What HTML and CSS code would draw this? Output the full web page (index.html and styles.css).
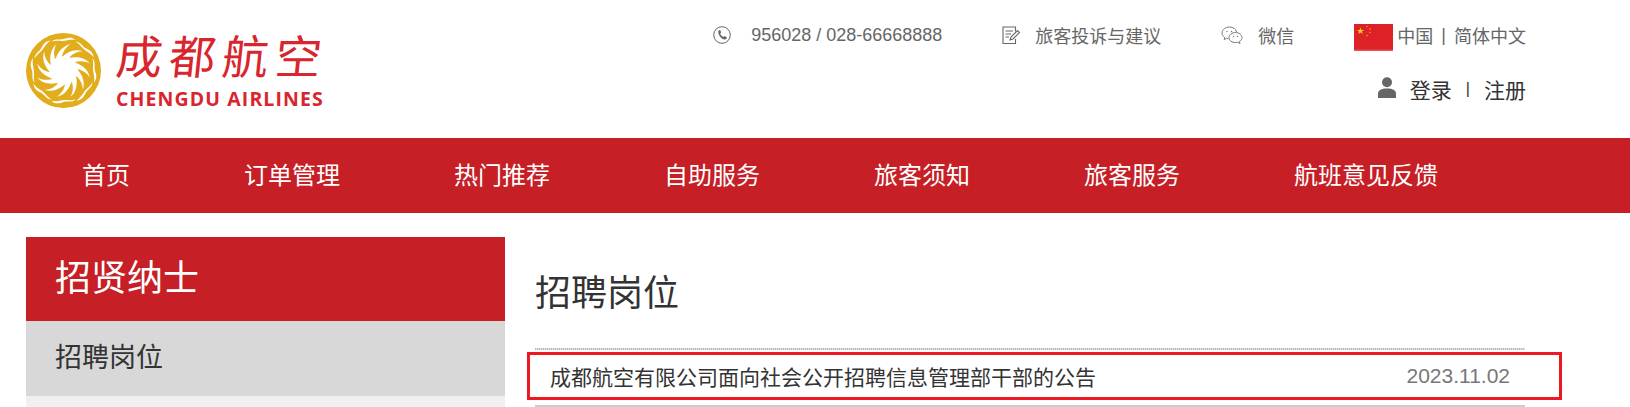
FILE: index.html
```html
<!DOCTYPE html>
<html lang="zh-CN">
<head>
    <meta charset="UTF-8">
    <meta name="viewport" content="width=device-width, initial-scale=1.0">
    <title>成都航空 - 招聘岗位</title>
    <link rel="stylesheet" href="styles.css">
</head>
<body>
    <header class="site-header">
        <a class="logo" href="#">
            <svg class="logo-mark" viewBox="-37 -37 74 74" width="75" height="75">
                <defs>
                    <path id="blade" d="M-3 -12 C3 -18 11 -22 19 -19 C13 -19 8 -16 4 -11 Z"/>
                    <path id="orn" d="M-12 -28.5 C-8 -32 -4 -30 0 -31 C3 -32 7 -34 12 -30 C8 -31 5 -30 1 -29.4 C-3 -28.6 -7 -30 -12 -28.5 Z"/>
                </defs>
                <circle r="37" fill="#e2ad1c"/>
                <circle r="14" fill="#fff"/>
                <g fill="#fff">
                    <use href="#blade"/>
                    <use href="#blade" transform="rotate(30)"/>
                    <use href="#blade" transform="rotate(60)"/>
                    <use href="#blade" transform="rotate(90)"/>
                    <use href="#blade" transform="rotate(120)"/>
                    <use href="#blade" transform="rotate(150)"/>
                    <use href="#blade" transform="rotate(180)"/>
                    <use href="#blade" transform="rotate(210)"/>
                    <use href="#blade" transform="rotate(240)"/>
                    <use href="#blade" transform="rotate(270)"/>
                    <use href="#blade" transform="rotate(300)"/>
                    <use href="#blade" transform="rotate(330)"/>
                    <use href="#orn"/>
                    <use href="#orn" transform="rotate(45)"/>
                    <use href="#orn" transform="rotate(90)"/>
                    <use href="#orn" transform="rotate(135)"/>
                    <use href="#orn" transform="rotate(180)"/>
                    <use href="#orn" transform="rotate(225)"/>
                    <use href="#orn" transform="rotate(270)"/>
                    <use href="#orn" transform="rotate(315)"/>
                </g>
            </svg>
            <div class="logo-text">
                <div class="logo-cn">成都航空</div>
                <div class="logo-en">CHENGDU AIRLINES</div>
            </div>
        </a>

        <div class="header-right">
            <div class="contact-row">
                <div class="contact-item phone">
                    <svg class="icon" viewBox="0 0 18 18" width="18" height="18" fill="none" stroke="#666">
                        <circle cx="9" cy="9" r="8.3"/>
                        <path d="M5.6 4.6 L7.2 4 L8.2 6.6 L7.2 7.6 C7.6 9 8.8 10.4 10.4 11 L11.4 10 L14 11.4 L13.2 13 C11.8 14 9.4 13.2 7.6 11.2 C5.6 9.2 4.8 6.2 5.6 4.6 Z" fill="#666" stroke="none"/>
                    </svg>
                    <span>956028 / 028-66668888</span>
                </div>
                <div class="contact-item">
                    <svg class="icon" viewBox="0 0 18 18" width="18" height="18" fill="none" stroke="#666" stroke-width="1.1">
                        <path d="M13.5 5.5 V1 H1 V17.5 H13.5 V13"/>
                        <path d="M3.5 5 H11 M3.5 8 H9 M3.5 11 H7"/>
                        <path d="M8 14 L9 11 L15.5 4.5 L17.5 6.5 L11 13 Z" fill="#fff"/>
                    </svg>
                    <span>旅客投诉与建议</span>
                </div>
                <div class="contact-item">
                    <svg class="icon" viewBox="0 0 22 18" width="22" height="18" fill="none" stroke="#777">
                        <path d="M8.5 1 C4.4 1 1 3.6 1 7 C1 8.9 2.2 10.5 3.8 11.6 L3.2 13.6 L5.6 12.4 C6.2 12.6 6.8 12.7 7.4 12.8"/>
                        <path d="M15.6 6 C15 3 12 1 8.5 1"/>
                        <path d="M14.5 6.5 C11 6.5 8 8.8 8 11.6 C8 14.4 11 16.6 14.5 16.6 C15.3 16.6 16 16.5 16.7 16.3 L19 17.5 L18.5 15.4 C20 14.4 21 13.1 21 11.6 C21 8.8 18 6.5 14.5 6.5 Z"/>
                        <circle cx="6" cy="5.5" r="0.7" fill="#777" stroke="none"/>
                        <circle cx="10.5" cy="5.5" r="0.7" fill="#777" stroke="none"/>
                        <circle cx="12.5" cy="10.5" r="0.7" fill="#777" stroke="none"/>
                        <circle cx="16.5" cy="10.5" r="0.7" fill="#777" stroke="none"/>
                    </svg>
                    <span>微信</span>
                </div>
                <div class="contact-item lang">
                    <svg class="flag" viewBox="0 0 39 27" width="39" height="27">
                        <rect width="39" height="27" fill="#de2027"/>
                        <rect y="25.5" width="39" height="1.5" fill="#e8505a"/>
                        <polygon points="6.5,3.5 7.4,6 10,6 7.9,7.6 8.7,10 6.5,8.6 4.3,10 5.1,7.6 3,6 5.6,6" fill="#f5d21c"/>
                        <circle cx="13" cy="2.5" r="0.8" fill="#e9a02a"/>
                        <circle cx="16" cy="5" r="0.8" fill="#e9a02a"/>
                        <circle cx="16" cy="8.5" r="0.8" fill="#e9a02a"/>
                        <circle cx="13" cy="11.5" r="0.8" fill="#e9a02a"/>
                    </svg>
                    <span>中国</span>
                    <span class="sep">|</span>
                    <span>简体中文</span>
                </div>
            </div>
            <div class="user-row">
                <svg class="icon" viewBox="0 0 18 21" width="18" height="21" fill="#666">
                    <circle cx="9" cy="5.2" r="5"/>
                    <path d="M0 21 V16.5 C0 13.2 3.5 11.4 9 11.4 C14.5 11.4 18 13.2 18 16.5 V21 Z"/>
                </svg>
                <a href="#">登录</a>
                <span class="sep">|</span>
                <a href="#">注册</a>
            </div>
        </div>
    </header>

    <nav class="main-nav">
        <a href="#">首页</a>
        <a href="#">订单管理</a>
        <a href="#">热门推荐</a>
        <a href="#">自助服务</a>
        <a href="#">旅客须知</a>
        <a href="#">旅客服务</a>
        <a href="#">航班意见反馈</a>
    </nav>

    <div class="page-body">
        <aside class="sidebar">
            <h2>招贤纳士</h2>
            <a class="side-item active" href="#">招聘岗位</a>
            <div class="side-rest"></div>
        </aside>
        <main class="content">
            <h1>招聘岗位</h1>
            <ul class="job-list">
                <li class="job-row">
                    <a href="#">成都航空有限公司面向社会公开招聘信息管理部干部的公告</a>
                    <span class="job-date">2023.11.02</span>
                </li>
            </ul>
        </main>
    </div>
</body>
</html>
```

FILE: styles.css
```css
html, body {
    height: 407px;
    overflow: hidden;
}

body {
    margin: 0;
    padding: 0;
    background: #fff;
    color: #333;
    font-family: "Liberation Sans", "Noto Sans CJK SC", sans-serif;
}

a {
    color: inherit;
    text-decoration: none;
}

.site-header {
    display: flex;
    justify-content: space-between;
    height: 138px;
    padding: 0 104px 0 26px;
    box-sizing: border-box;
}

.logo {
    display: flex;
    gap: 15px;
    padding-top: 33px;
}

.logo-mark {
    display: block;
}

.logo-text {
    width: 208px;
}

.logo-cn {
    height: 57px;
    color: #d9252d;
    font-size: 46px;
    line-height: 50px;
    letter-spacing: 7px;
    white-space: nowrap;
    transform: skewX(-6deg);
}

.logo-en {
    color: #d9252d;
    font-family: "Open Sans", sans-serif;
    font-size: 19.5px;
    font-weight: 700;
    line-height: 18px;
    letter-spacing: 1.1px;
    white-space: nowrap;
}

.header-right {
    display: flex;
    flex-direction: column;
    align-items: flex-end;
    padding-top: 24px;
}

.contact-row {
    display: flex;
    align-items: flex-start;
    gap: 60px;
    height: 27px;
    color: #666;
    font-size: 18px;
}

.contact-item {
    display: flex;
    align-items: center;
    gap: 15px;
    height: 22px;
}

.contact-item.phone {
    gap: 20px;
}

.contact-item.lang {
    gap: 4px;
}

.contact-item .sep {
    margin: 0 4px;
}

.icon {
    display: block;
    flex: none;
}

.flag {
    display: block;
    flex: none;
    align-self: flex-start;
}

.user-row {
    display: flex;
    align-items: center;
    gap: 14px;
    height: 30px;
    margin-top: 23px;
    color: #333;
    font-size: 21px;
}

.user-row .icon {
    margin-bottom: 3px;
}

.user-row .sep {
    font-size: 16px;
}

.main-nav {
    display: flex;
    height: 75px;
    padding-left: 25px;
    background: #c61f26;
}

.main-nav a {
    padding: 0 57px;
    color: #fff;
    font-size: 24px;
    line-height: 75px;
}

.page-body {
    display: flex;
    gap: 30px;
    padding: 24px 105px 0 26px;
}

.sidebar {
    flex: none;
    width: 479px;
}

.sidebar h2 {
    margin: 0;
    padding-left: 29px;
    background: #c61f26;
    color: #fff;
    font-size: 36px;
    font-weight: 400;
    line-height: 84px;
}

.side-item {
    display: block;
    height: 75px;
    padding-left: 29px;
    font-size: 27px;
    line-height: 75px;
}

.side-item.active {
    background: #d8d8d8;
}

.side-rest {
    height: 11px;
    background: #f0f0f0;
}

.content {
    flex: 1;
}

.content h1 {
    margin: 0;
    height: 113px;
    box-sizing: border-box;
    padding-top: 24px;
    background: repeating-linear-gradient(90deg, #b8b8b8 0 1px, #e0e0e0 1px 2px) no-repeat bottom / 100% 2px;
    font-size: 36px;
    font-weight: 400;
    line-height: 66px;
}

.job-list {
    margin: 0;
    padding: 2px 0 5px;
    list-style: none;
    border-bottom: 2px solid #ccc;
}

.job-row {
    display: flex;
    justify-content: space-between;
    align-items: center;
    height: 48px;
    margin: 0 -37px 0 -8px;
    padding: 0 49px 0 20px;
    border: 3px solid #ee1822;
    box-sizing: border-box;
    font-size: 21px;
}

.job-date {
    color: #777;
}
```
